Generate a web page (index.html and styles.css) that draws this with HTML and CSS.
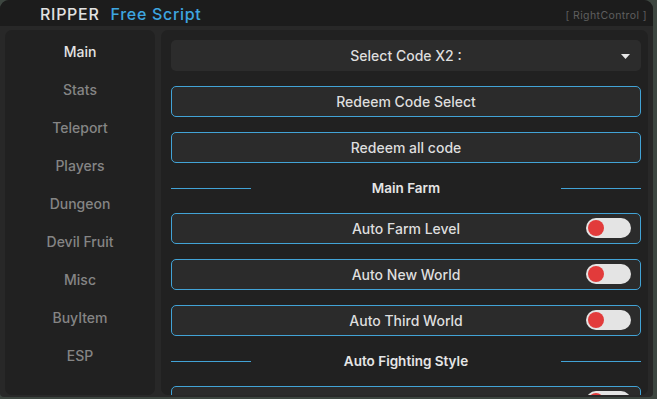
FILE: index.html
```html
<!DOCTYPE html>
<html>
<head>
<meta charset="utf-8">
<link rel="stylesheet" href="styles.css">
</head>
<body>
<div class="window">
  <div class="titlebar">
    <div class="title"><span class="brand">RIPPER</span><span class="sub">Free Script</span></div>
    <div class="keybind">[ RightControl ]</div>
  </div>
  <div class="body">
    <nav class="sidebar">
      <div class="tab active">Main</div>
      <div class="tab">Stats</div>
      <div class="tab">Teleport</div>
      <div class="tab">Players</div>
      <div class="tab">Dungeon</div>
      <div class="tab">Devil Fruit</div>
      <div class="tab">Misc</div>
      <div class="tab">BuyItem</div>
      <div class="tab">ESP</div>
    </nav>
    <main class="content">
      <div class="list">
        <div class="dropdown">
          <span>Select Code X2 :</span>
          <svg class="arrow" width="9" height="5" viewBox="0 0 9 5"><path d="M0 0H9L4.5 5Z" fill="#e8e8e8"/></svg>
        </div>
        <div class="btn">Redeem Code Select</div>
        <div class="btn">Redeem all code</div>
        <div class="section"><span class="line"></span><span class="label">Main Farm</span><span class="line"></span></div>
        <div class="btn toggle-row"><span>Auto Farm Level</span><span class="toggle"><span class="knob"></span></span></div>
        <div class="btn toggle-row"><span>Auto New World</span><span class="toggle"><span class="knob"></span></span></div>
        <div class="btn toggle-row"><span>Auto Third World</span><span class="toggle"><span class="knob"></span></span></div>
        <div class="section"><span class="line"></span><span class="label">Auto Fighting Style</span><span class="line"></span></div>
        <div class="btn toggle-row"><span class="toggle"><span class="knob"></span></span></div>
      </div>
    </main>
  </div>
</div>
</body>
</html>
```
FILE: styles.css
```css
html, body {
  margin: 0;
  padding: 0;
}
body {
  width: 657px;
  height: 399px;
  background: #3d4640;
  font-family: Inter, "Noto Sans", sans-serif;
  overflow: hidden;
}
.window {
  width: 653px;
  height: 397px;
  background: #282828;
  border-radius: 9px 9px 4px 4px;
  display: flex;
  flex-direction: column;
  overflow: hidden;
}
.titlebar {
  height: 26px;
  flex: none;
  background: #1c1c1c;
  display: flex;
  align-items: center;
  justify-content: space-between;
  padding: 0 6px 0 40px;
}
.title {
  font-size: 16px;
  font-weight: 500;
  letter-spacing: 0.7px;
  display: flex;
  gap: 11px;
  margin-top: 1px;
}
.brand { color: #e2e2e2; }
.sub { color: #3ea6e0; }
.keybind {
  color: #5f5f5f;
  font-size: 10.5px;
  letter-spacing: 0.4px;
  margin-top: 4px;
}
.body {
  flex: 1;
  display: flex;
  gap: 6px;
  padding: 4px 5px 2px 5px;
  min-height: 0;
}
.sidebar {
  width: 150px;
  flex: none;
  background: #212121;
  border-radius: 7px;
  padding-top: 2px;
  display: flex;
  flex-direction: column;
}
.tab {
  height: 38px;
  display: flex;
  align-items: center;
  justify-content: center;
  font-size: 14px;
  font-weight: 500;
  color: #858585;
}
.tab.active { color: #e4e4e4; }
.content {
  flex: 1;
  background: #212121;
  border-radius: 7px;
  padding: 10px 7px 0 10px;
  overflow: hidden;
}
.list {
  display: flex;
  flex-direction: column;
  gap: 15px;
}
.dropdown, .btn {
  height: 31px;
  box-sizing: border-box;
  border-radius: 5px;
  background: #2b2b2b;
  color: #dedede;
  font-size: 14px;
  font-weight: 500;
  display: flex;
  align-items: center;
  justify-content: center;
  position: relative;
  flex: none;
}
.dropdown { background: #2c2c2c; }
.dropdown .arrow {
  position: absolute;
  right: 11px;
  top: 14px;
}
.btn {
  border: 1px solid #42a3d6;
}
.toggle {
  position: absolute;
  right: 9px;
  top: 4px;
  width: 45px;
  height: 20px;
  border-radius: 10px;
  background: #e4e4e4;
}
.knob {
  position: absolute;
  left: 2px;
  top: 2px;
  width: 16px;
  height: 16px;
  border-radius: 50%;
  background: #e23b3b;
}
.section {
  height: 20px;
  display: flex;
  align-items: center;
  justify-content: space-between;
  flex: none;
}
.section .line {
  width: 80px;
  height: 1px;
  background: #42a3d6;
}
.section .label {
  color: #e6e6e6;
  font-size: 13.5px;
  font-weight: 600;
}
```
